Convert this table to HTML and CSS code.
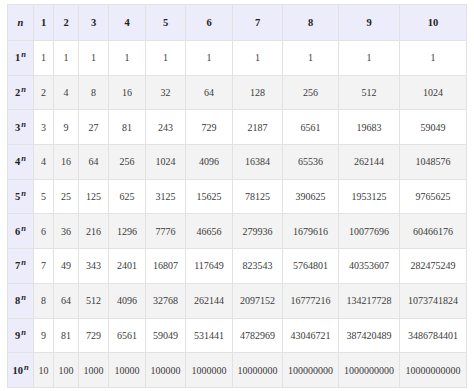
FILE: index.html
```html
<!DOCTYPE html>
<html>
<head>
<meta charset="utf-8">
<link rel="stylesheet" href="styles.css">
</head>
<body>
<div class="wrap">
<table class="pow">
<colgroup>
<col style="width:26px"><col style="width:20px"><col style="width:25px"><col style="width:30px"><col style="width:37px"><col style="width:40px"><col style="width:47px"><col style="width:50px"><col style="width:56px"><col style="width:61px"><col style="width:67px">
</colgroup>
<thead>
<tr><th><i>n</i></th><th>1</th><th>2</th><th>3</th><th>4</th><th>5</th><th>6</th><th>7</th><th>8</th><th>9</th><th>10</th></tr>
</thead>
<tbody>
<tr><th>1<sup>n</sup></th><td>1</td><td>1</td><td>1</td><td>1</td><td>1</td><td>1</td><td>1</td><td>1</td><td>1</td><td>1</td></tr>
<tr><th>2<sup>n</sup></th><td>2</td><td>4</td><td>8</td><td>16</td><td>32</td><td>64</td><td>128</td><td>256</td><td>512</td><td>1024</td></tr>
<tr><th>3<sup>n</sup></th><td>3</td><td>9</td><td>27</td><td>81</td><td>243</td><td>729</td><td>2187</td><td>6561</td><td>19683</td><td>59049</td></tr>
<tr><th>4<sup>n</sup></th><td>4</td><td>16</td><td>64</td><td>256</td><td>1024</td><td>4096</td><td>16384</td><td>65536</td><td>262144</td><td>1048576</td></tr>
<tr><th>5<sup>n</sup></th><td>5</td><td>25</td><td>125</td><td>625</td><td>3125</td><td>15625</td><td>78125</td><td>390625</td><td>1953125</td><td>9765625</td></tr>
<tr><th>6<sup>n</sup></th><td>6</td><td>36</td><td>216</td><td>1296</td><td>7776</td><td>46656</td><td>279936</td><td>1679616</td><td>10077696</td><td>60466176</td></tr>
<tr><th>7<sup>n</sup></th><td>7</td><td>49</td><td>343</td><td>2401</td><td>16807</td><td>117649</td><td>823543</td><td>5764801</td><td>40353607</td><td>282475249</td></tr>
<tr><th>8<sup>n</sup></th><td>8</td><td>64</td><td>512</td><td>4096</td><td>32768</td><td>262144</td><td>2097152</td><td>16777216</td><td>134217728</td><td>1073741824</td></tr>
<tr><th>9<sup>n</sup></th><td>9</td><td>81</td><td>729</td><td>6561</td><td>59049</td><td>531441</td><td>4782969</td><td>43046721</td><td>387420489</td><td>3486784401</td></tr>
<tr><th>10<sup>n</sup></th><td>10</td><td>100</td><td>1000</td><td>10000</td><td>100000</td><td>1000000</td><td>10000000</td><td>100000000</td><td>1000000000</td><td>10000000000</td></tr>
</tbody>
</table>
</div>
</body>
</html>
```
FILE: styles.css
```css
html, body { margin: 0; padding: 0; background: #fff; }
.wrap { padding: 4px 0 0 7px; }
.pow {
  border-collapse: collapse;
  table-layout: fixed;
  width: 459px;
  font-family: "Liberation Serif", "Times New Roman", serif;
  font-size: 10px;
  color: #3a3a3a;
  border: 1px solid #dcdcdc;
}
.pow th, .pow td {
  border: 1px solid #e2e2e2;
  text-align: center;
  padding: 0;
  height: 33.7px;
  white-space: nowrap;
  overflow: visible;
}
.pow th { background: #ececfa; font-weight: bold; color: #222; font-size: 10.5px; }
.pow thead th { height: 35px; }
.pow tbody tr:nth-child(odd) td { background: #fff; }
.pow tbody tr:nth-child(even) td { background: #f3f3f3; }
.pow sup { font-style: italic; font-size: 8.5px; vertical-align: 4px; line-height: 0; margin-left: 1px; }
.pow i { font-style: italic; }
```
